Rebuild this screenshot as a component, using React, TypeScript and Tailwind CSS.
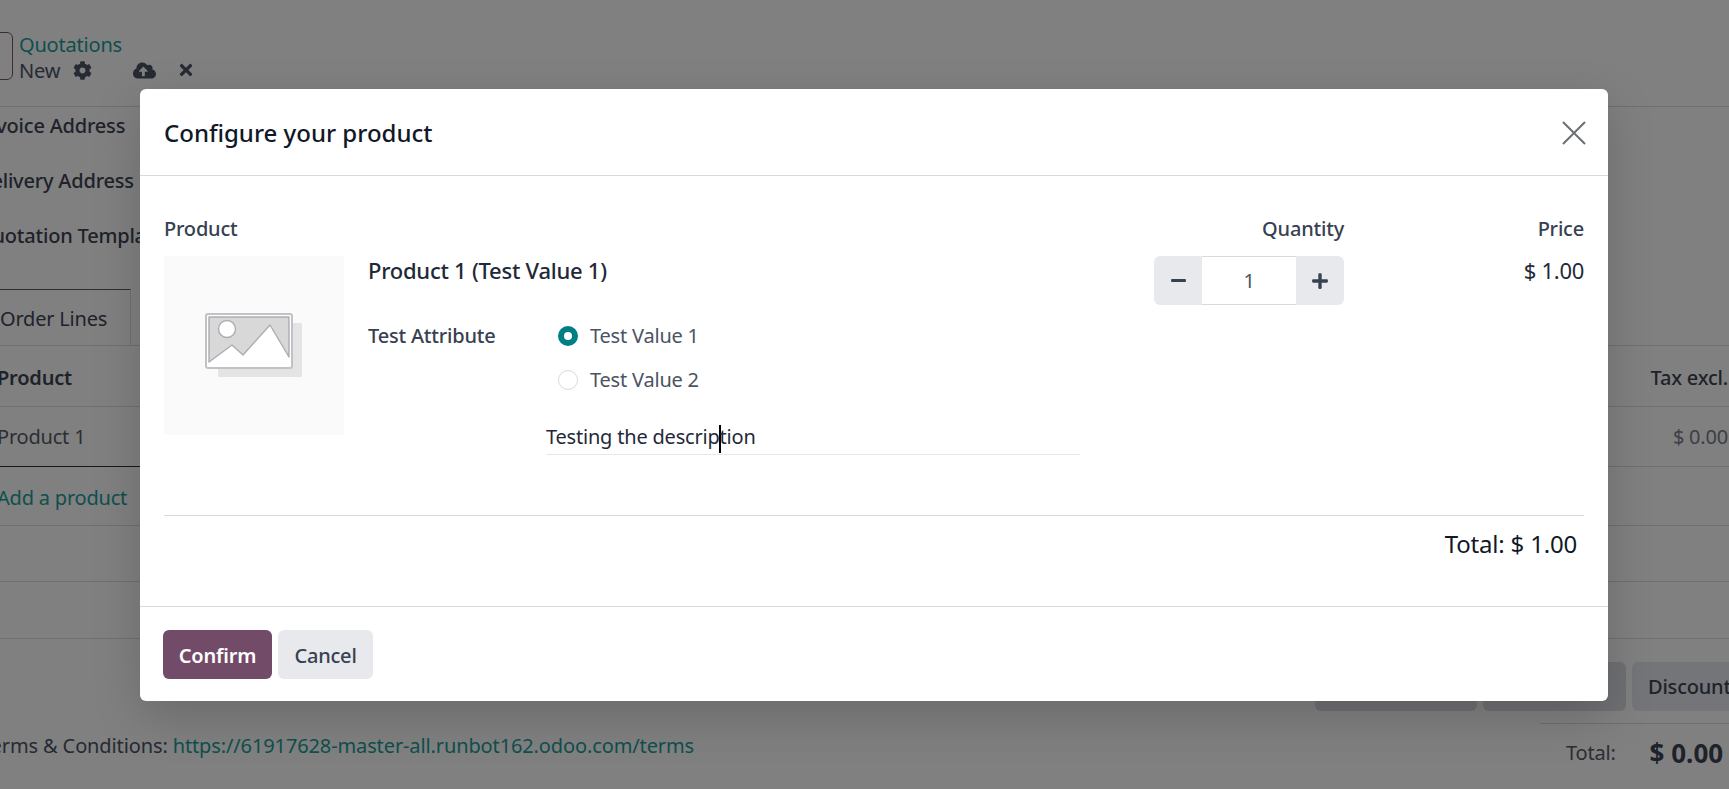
import { FaCog, FaCloudUploadAlt, FaTimes, FaMinus, FaPlus } from "react-icons/fa"

function BackdropRow({ left, right, className }: { left?: React.ReactNode; right?: React.ReactNode; className: string }) {
  return (
    <div className={`flex items-center justify-between border-b border-[#6f6f6f] ${className}`}>
      <div>{left}</div>
      <div>{right}</div>
    </div>
  )
}

function PlaceholderImage() {
  return (
    <svg width="97" height="64" viewBox="0 0 97 64" fill="none">
      <rect x="13" y="10" width="84" height="54" rx="1" fill="#e4e4e4" />
      <rect x="1" y="1" width="86" height="54" rx="2" fill="#ffffff" stroke="#c2c2c6" strokeWidth="2" />
      <path d="M4 4 H84 V44 L65 12 L38 42 L27 32 L4 49 Z" fill="#d8d8d8" />
      <path d="M4 49 V4 H84 V44 L65 12 L38 42 L27 32 Z" stroke="#acacb2" strokeWidth="1.4" strokeLinejoin="round" />
      <circle cx="22" cy="16" r="8.5" fill="#ffffff" stroke="#acacb2" strokeWidth="1.4" />
    </svg>
  )
}

function Backdrop() {
  return (
    <div className="flex h-[789px] w-[1729px] flex-col overflow-hidden text-[20px] leading-[28px] tracking-[-0.2px] text-[#1e222a]">
      <div className="flex h-[107px] shrink-0 items-start gap-[6px] border-b border-[#6f6f6f] pt-[32px]">
        <div className="-ml-[20px] h-[48px] w-[33px] rounded-[6px] border border-[#3f2b38]" />
        <div className="flex flex-col">
          <a className="pt-[1px] text-[#0f4f4e] leading-[24px]">Quotations</a>
          <div className="flex items-center pt-[1px] leading-[26px] text-[#252a33]">
            <span>New</span>
            <FaCog className="ml-[13px] -mt-[2px] text-[19px]" />
            <FaCloudUploadAlt className="ml-[41px] -mt-[2px] text-[23px]" />
            <FaTimes className="ml-[21px] -mt-[2px] text-[18px]" />
          </div>
        </div>
      </div>

      <div className="-ml-[23px] flex h-[182px] shrink-0 flex-col pt-[5px] font-medium">
        <div className="flex h-[28px] items-center">Invoice Address</div>
        <div className="mt-[27px] flex h-[28px] items-center">Delivery Address</div>
        <div className="mt-[27px] flex h-[28px] items-center">Quotation Template</div>
      </div>

      <div className="flex h-[57px] shrink-0 border-b border-[#6f6f6f]">
        <div className="flex w-[131px] items-center border-t border-r border-t-[#2e2e2e] border-r-[#6f6f6f] pt-[3px]">Order Lines</div>
      </div>

      <BackdropRow
        className="h-[61px] shrink-0 pt-[3px]"
        left={<span className="-ml-[3px] font-semibold">Product</span>}
        right={<span className="mr-[1px] font-medium">Tax excl.</span>}
      />
      <div className="flex h-[60px] shrink-0 items-stretch justify-between border-b border-[#6f6f6f]">
        <div className="-mb-[1px] flex w-[800px] items-center border-b border-[#15181d]">
          <span className="-ml-[3px] text-[#2b2e34]">Product 1</span>
        </div>
        <div className="flex items-center">
          <span className="mr-[1px] text-[#3c3f45]">$ 0.00</span>
        </div>
      </div>
      <BackdropRow className="h-[59px] shrink-0 pt-[3px]" left={<a className="-ml-[3px] text-[#0f4f4e]">Add a product</a>} />
      <BackdropRow className="h-[56px] shrink-0" />
      <BackdropRow className="h-[57px] shrink-0" />

      <div className="flex grow justify-between">
        <div className="-ml-[19px] mt-[93px] flex h-[28px] items-center gap-[5px] tracking-[-0.12px] text-[#252a33]">
          <span>Terms &amp; Conditions:</span>
          <a className="text-[#0f4f4e]">https://61917628-master-all.runbot162.odoo.com/terms</a>
        </div>
        <div className="-mr-[39px] flex w-[454px] shrink-0 flex-col items-end pt-[23px]">
          <div className="flex h-[49px] gap-[6px]">
            <div className="w-[162px] rounded-[6px] bg-[#6f7073]" />
            <div className="w-[143px] rounded-[6px] bg-[#6f7073]" />
            <div className="flex w-[136px] items-center rounded-[6px] bg-[#747578] pl-[16px] font-medium">Discount</div>
          </div>
          <div className="mr-[39px] mt-[12px] flex h-[58px] w-[189px] items-center gap-[34px] self-end border-t border-[#6f6f6f] pl-[26px] whitespace-nowrap">
            <span className="text-[#2b2e34]">Total:</span>
            <span className="text-[26px] font-bold tracking-normal">$ 0.00</span>
          </div>
        </div>
      </div>
    </div>
  )
}

function RadioOption({ label, checked }: { label: string; checked?: boolean }) {
  return (
    <div className="flex h-[28px] items-center gap-[12px] pl-[12px] text-[#4a5462]">
      {checked ? (
        <span className="size-[20px] rounded-full border-[6px] border-[#017e84] bg-white" />
      ) : (
        <span className="size-[20px] rounded-full border border-[#d8dadd] bg-white" />
      )}
      <span>{label}</span>
    </div>
  )
}

function ConfigureModal() {
  return (
    <div className="absolute inset-0 pt-[89px] pl-[140px]">
      <div className="flex h-[612px] w-[1468px] flex-col rounded-[6px] bg-white text-[20px] leading-[28px] tracking-[-0.2px] text-[#374151] shadow-[0_16px_48px_rgba(0,0,0,0.175)]">
        <div className="flex h-[87px] shrink-0 items-center justify-between border-b border-[#d8dadd] pl-[24px] pr-[22px] pt-[2px]">
          <h4 className="text-[24px] font-medium tracking-normal text-[#111827]">Configure your product</h4>
          <svg width="24" height="24" viewBox="0 0 24 24" stroke="#6b6f76" strokeWidth="2" fill="none">
            <path d="M1 1 L23 23 M23 1 L1 23" />
          </svg>
        </div>

        <div className="flex h-[431px] shrink-0 flex-col border-b border-[#d8dadd] px-[24px]">
          <div className="flex h-[340px] shrink-0 gap-[24px] border-b border-[#d8dadd] pt-[38px]">
            <div className="w-[180px] shrink-0">
              <div className="h-[28px] pt-[1px] font-medium">Product</div>
              <div className="mt-[14px] flex h-[179px] items-center justify-center bg-[#fafafa] pb-[2px] pr-[2px]">
                <PlaceholderImage />
              </div>
            </div>

            <div className="flex grow flex-col pt-[42px]">
              <div className="h-[28px] text-[22px] font-medium tracking-[-0.25px] text-[#1f2937]">Product 1 (Test Value 1)</div>
              <div className="mt-[38px] flex">
                <div className="w-[178px] shrink-0 font-medium">Test Attribute</div>
                <div className="flex flex-col gap-[16px]">
                  <RadioOption label="Test Value 1" checked />
                  <RadioOption label="Test Value 2" />
                </div>
              </div>
              <div className="ml-[178px] mt-[29px] h-[32px] w-[534px] border-b border-[#e5e7eb] text-[#1f2937]">
                Testing the descrip
                <span className="-mx-[1px] inline-block h-[28px] w-[2px] bg-black align-middle" />
                tion
              </div>
            </div>

            <div className="flex w-[190px] shrink-0 flex-col items-end">
              <div className="h-[28px] pt-[1px] font-medium">Quantity</div>
              <div className="mt-[14px] flex h-[49px] w-[190px] overflow-hidden rounded-[6px]">
                <div className="flex w-[48px] items-center justify-center bg-[#e7e9ed]"><FaMinus className="text-[17px]" /></div>
                <div className="flex grow items-center justify-center border-y border-[#d8dadd] bg-white text-[#4b5563]">1</div>
                <div className="flex w-[48px] items-center justify-center bg-[#e7e9ed]"><FaPlus className="text-[18px]" /></div>
              </div>
            </div>

            <div className="flex w-[216px] shrink-0 flex-col items-end">
              <div className="h-[28px] pt-[1px] font-medium">Price</div>
              <div className="mt-[14px] text-[22px] tracking-[-0.3px] text-[#1f2937]">$ 1.00</div>
            </div>
          </div>

          <div className="flex justify-end pr-[7px] pt-[11px] text-[24px] leading-[34px] tracking-[-0.2px] text-[#111827]">Total: $ 1.00</div>
        </div>

        <div className="flex grow items-start gap-[6px] pl-[23px] pt-[23px]">
          <button className="flex h-[49px] w-[109px] items-center justify-center rounded-[6px] bg-[#714b67] pt-[2px] font-semibold text-white">Confirm</button>
          <button className="flex h-[49px] w-[95px] items-center justify-center rounded-[6px] bg-[#e7e9ed] pt-[2px] font-medium">Cancel</button>
        </div>
      </div>
    </div>
  )
}

export default function App() {
  return (
    <div className="relative h-[789px] w-[1729px] overflow-hidden bg-[#808080] font-['Noto_Sans',sans-serif]">
      <Backdrop />
      <ConfigureModal />
    </div>
  )
}
